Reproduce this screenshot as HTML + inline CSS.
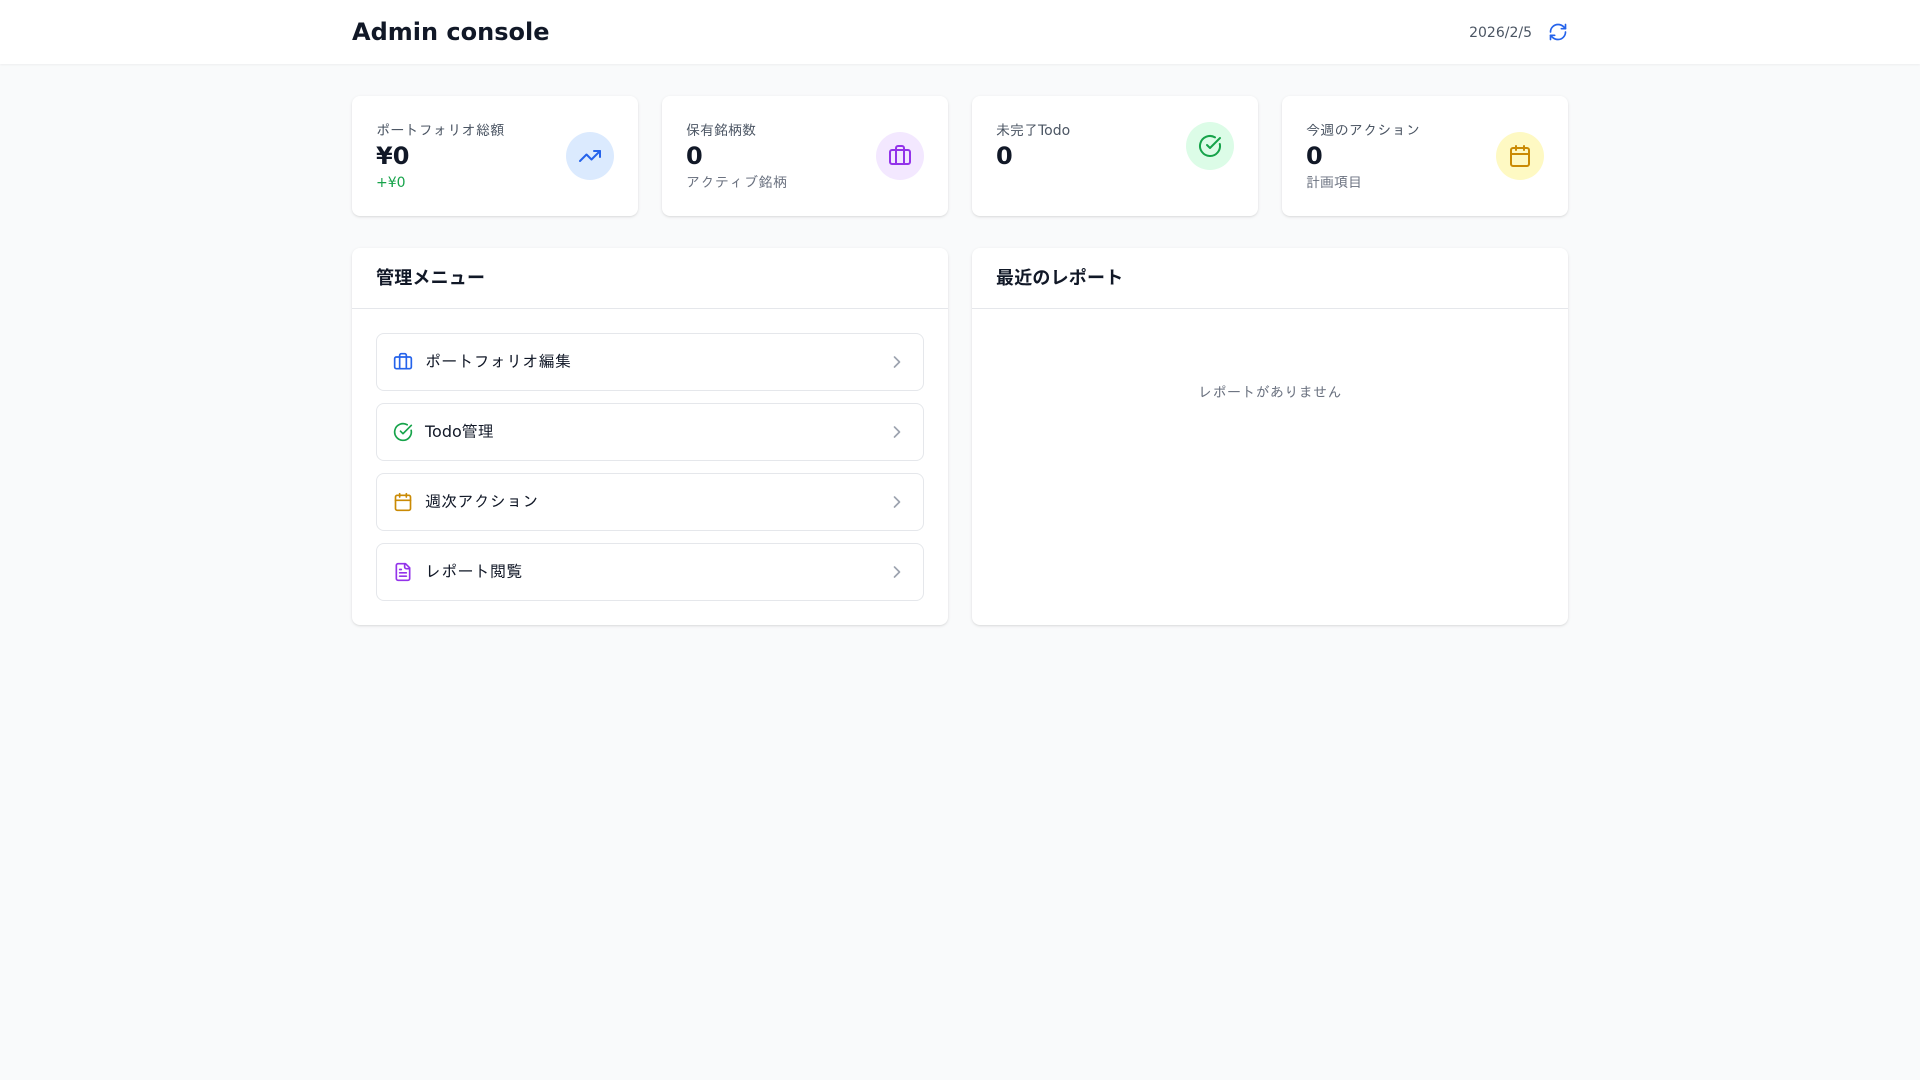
<!DOCTYPE html>
<html>
<head>
<meta charset="utf-8">
<title>Admin console</title>
<style>
*{box-sizing:border-box;margin:0;padding:0}
html,body{width:1920px;height:1080px;overflow:hidden;background:#f9fafb}
body{font-family:"DejaVu Sans","IPAGothic",sans-serif;color:#111827;line-height:1.5}
svg{display:block;fill:none;stroke:currentColor;stroke-width:2;stroke-linecap:round;stroke-linejoin:round;flex:none}
header{height:64px;background:#fff;box-shadow:0 1px 2px rgba(0,0,0,.05);position:relative}
.wrap{width:1216px;margin:0 auto;position:relative}
header .wrap{height:64px;display:flex;align-items:center;justify-content:space-between}
h1{font-size:24px;line-height:32px;font-weight:700}
.right{display:flex;align-items:center;gap:16px}
.date{font-size:14px;line-height:20px;color:#4b5563;position:relative;top:1px}
main{padding-top:32px}
.cards{display:grid;grid-template-columns:repeat(4,286px);gap:24px}
.card{height:120px;background:#fff;border-radius:8px;box-shadow:0 1px 3px rgba(0,0,0,.1),0 1px 2px -1px rgba(0,0,0,.1);padding:24px;display:flex;justify-content:space-between;align-items:flex-start}
.row{display:flex;justify-content:space-between;align-items:center;width:100%}
.lab{font-size:14px;line-height:20px;color:#4b5563;position:relative;top:1px}
.val{font-size:24px;line-height:32px;font-weight:700}
.sub{font-size:14px;line-height:20px;color:#6b7280;position:relative;top:1px}
.ic{width:48px;height:48px;border-radius:50%;display:flex;align-items:center;justify-content:center}
.panels{display:grid;grid-template-columns:596px 596px;gap:24px;margin-top:32px}
.panel{height:377px;background:#fff;border-radius:8px;box-shadow:0 1px 3px rgba(0,0,0,.1),0 1px 2px -1px rgba(0,0,0,.1)}
.ph{height:61px;border-bottom:1px solid #e5e7eb;padding:16px 24px}
h2{font-family:"DejaVu Sans","Noto Sans CJK JP",sans-serif;font-size:18px;line-height:28px;font-weight:600;position:relative;top:1px;letter-spacing:.2px}
.pb{padding:24px}
.item{height:58px;border:1px solid #e5e7eb;border-radius:8px;padding:0 16px;display:flex;align-items:center;margin-bottom:12px;font-size:16px;color:#111827}
.item:last-child{margin-bottom:0}
.item span{margin-left:12px;flex:1;letter-spacing:.25px}
.empty{padding-top:50px;text-align:center;font-size:14px;line-height:20px;color:#6b7280;letter-spacing:.37px}
</style>
</head>
<body>
<header>
  <div class="wrap">
    <h1>Admin console</h1>
    <div class="right">
      <div class="date">2026/2/5</div>
      <svg width="20" height="20" viewBox="0 0 24 24" style="color:#2563eb"><path d="M3 12a9 9 0 0 1 9-9 9.75 9.75 0 0 1 6.74 2.74L21 8"/><path d="M21 3v5h-5"/><path d="M21 12a9 9 0 0 1-9 9 9.75 9.75 0 0 1-6.74-2.74L3 16"/><path d="M8 16H3v5"/></svg>
    </div>
  </div>
</header>
<main>
  <div class="wrap">
    <div class="cards">
      <div class="card"><div class="row">
        <div><div class="lab" style="letter-spacing:.28px">ポートフォリオ総額</div><div class="val">¥0</div><div class="sub" style="color:#16a34a">+¥0</div></div>
        <div class="ic" style="background:#dbeafe;color:#2563eb"><svg width="24" height="24" viewBox="0 0 24 24"><polyline points="22 7 13.5 15.5 8.5 10.5 2 17"/><polyline points="16 7 22 7 22 13"/></svg></div>
      </div></div>
      <div class="card"><div class="row">
        <div><div class="lab">保有銘柄数</div><div class="val">0</div><div class="sub" style="letter-spacing:.5px">アクティブ銘柄</div></div>
        <div class="ic" style="background:#f3e8ff;color:#9333ea"><svg width="24" height="24" viewBox="0 0 24 24"><path d="M16 20V4a2 2 0 0 0-2-2h-4a2 2 0 0 0-2 2v16"/><rect width="20" height="14" x="2" y="6" rx="2"/></svg></div>
      </div></div>
      <div class="card"><div class="row">
        <div><div class="lab">未完了Todo</div><div class="val">0</div></div>
        <div class="ic" style="background:#dcfce7;color:#16a34a"><svg width="24" height="24" viewBox="0 0 24 24"><path d="M21.801 10A10 10 0 1 1 17 3.335"/><path d="m9 11 3 3L22 4"/></svg></div>
      </div></div>
      <div class="card"><div class="row">
        <div><div class="lab" style="letter-spacing:.3px">今週のアクション</div><div class="val">0</div><div class="sub">計画項目</div></div>
        <div class="ic" style="background:#fef9c3;color:#ca8a04"><svg width="24" height="24" viewBox="0 0 24 24"><path d="M8 2v4"/><path d="M16 2v4"/><rect width="18" height="18" x="3" y="4" rx="2"/><path d="M3 10h18"/></svg></div>
      </div></div>
    </div>
    <div class="panels">
      <div class="panel">
        <div class="ph"><h2>管理メニュー</h2></div>
        <div class="pb">
          <div class="item"><svg width="20" height="20" viewBox="0 0 24 24" style="color:#2563eb"><path d="M16 20V4a2 2 0 0 0-2-2h-4a2 2 0 0 0-2 2v16"/><rect width="20" height="14" x="2" y="6" rx="2"/></svg><span>ポートフォリオ編集</span><svg width="20" height="20" viewBox="0 0 24 24" style="color:#9ca3af"><path d="m9 18 6-6-6-6"/></svg></div>
          <div class="item"><svg width="20" height="20" viewBox="0 0 24 24" style="color:#16a34a"><path d="M21.801 10A10 10 0 1 1 17 3.335"/><path d="m9 11 3 3L22 4"/></svg><span style="letter-spacing:0">Todo管理</span><svg width="20" height="20" viewBox="0 0 24 24" style="color:#9ca3af"><path d="m9 18 6-6-6-6"/></svg></div>
          <div class="item"><svg width="20" height="20" viewBox="0 0 24 24" style="color:#ca8a04"><path d="M8 2v4"/><path d="M16 2v4"/><rect width="18" height="18" x="3" y="4" rx="2"/><path d="M3 10h18"/></svg><span>週次アクション</span><svg width="20" height="20" viewBox="0 0 24 24" style="color:#9ca3af"><path d="m9 18 6-6-6-6"/></svg></div>
          <div class="item"><svg width="20" height="20" viewBox="0 0 24 24" style="color:#9333ea"><path d="M15 2H6a2 2 0 0 0-2 2v16a2 2 0 0 0 2 2h12a2 2 0 0 0 2-2V7Z"/><path d="M14 2v4a2 2 0 0 0 2 2h4"/><path d="M10 9H8"/><path d="M16 13H8"/><path d="M16 17H8"/></svg><span>レポート閲覧</span><svg width="20" height="20" viewBox="0 0 24 24" style="color:#9ca3af"><path d="m9 18 6-6-6-6"/></svg></div>
        </div>
      </div>
      <div class="panel">
        <div class="ph"><h2>最近のレポート</h2></div>
        <div class="pb"><div class="empty">レポートがありません</div></div>
      </div>
    </div>
  </div>
</main>
</body>
</html>
